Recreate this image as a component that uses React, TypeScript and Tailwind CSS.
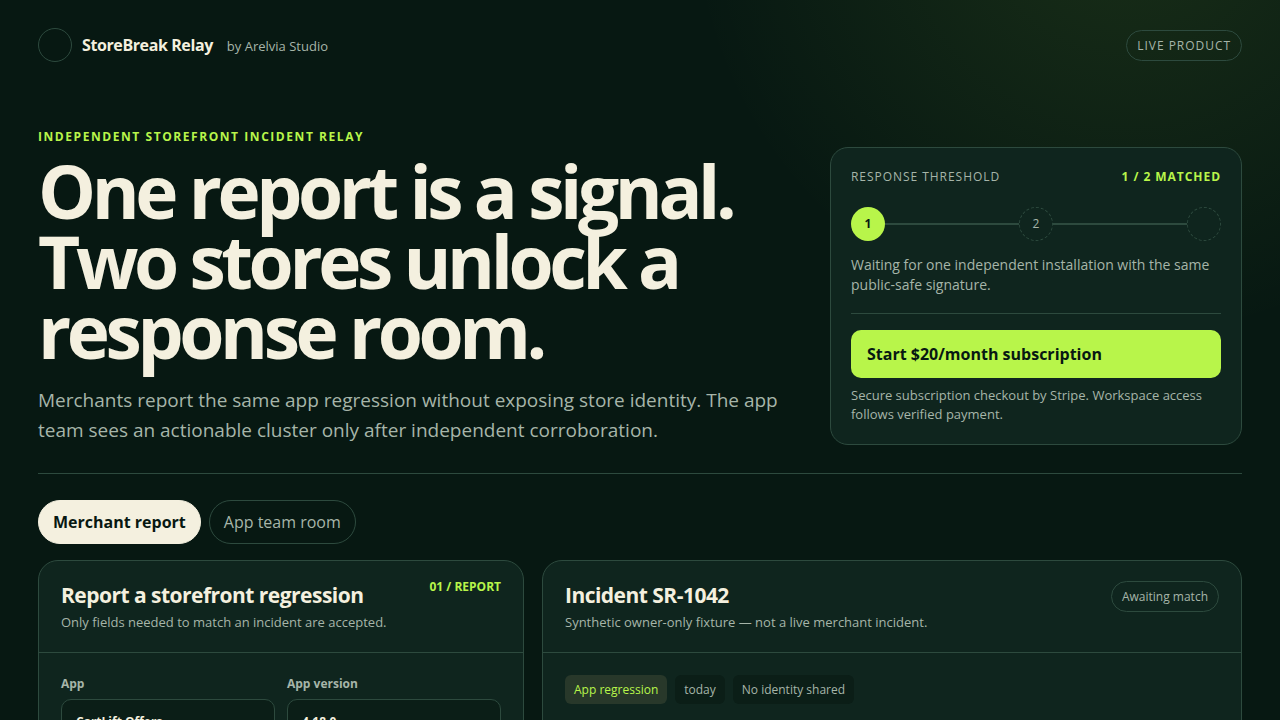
import { ReactNode, useState } from "react";

type View = "merchant" | "team";

const views: { id: View; label: string }[] = [
  { id: "merchant", label: "Merchant report" },
  { id: "team", label: "App team room" },
];

export default function App() {
  const [view, setView] = useState<View>("merchant");

  return (
    <div className="min-h-screen bg-[#071812] bg-[radial-gradient(circle_440px_at_88%_-98px,rgba(184,245,74,0.1),transparent)] bg-no-repeat px-[38px] pb-10 font-['Open_Sans',sans-serif] text-[#f4f0df]">
      <header className="flex items-center justify-between pt-7">
        <div className="flex items-center">
          <span className="size-[34px] rounded-full border border-[#2d4a3e]" />
          <div className="ml-[10px] flex items-baseline gap-[14px]">
            <strong className="text-base font-bold tracking-tight">
              StoreBreak Relay
            </strong>
            <span className="text-[13px] text-[#a6b5a9]">
              by Arelvia Studio
            </span>
          </div>
        </div>
        <span className="rounded-full border border-[#2d4a3e] px-[10px] py-[6px] text-xs leading-[17px] tracking-[0.08em] text-[#a6b5a9]">
          LIVE PRODUCT
        </span>
      </header>

      <main>
        <section className="mt-[65px] grid grid-cols-[1fr_412px] items-end gap-11 border-b border-[#2d4a3e] pb-7">
          <div>
            <p className="text-xs leading-5 font-bold tracking-[0.13em] text-[#b8f54a]">
              INDEPENDENT STOREFRONT INCIDENT RELAY
            </p>
            <h1 className="mt-[9px] text-[73px] leading-[70px] font-bold tracking-[-0.06em]">
              One report is a signal. Two stores unlock a response room.
            </h1>
            <p className="mt-[19px] text-[19px] leading-[30px] text-[#a6b5a9]">
              Merchants report the same app regression without exposing store
              identity. The app team sees an actionable cluster only after
              independent corroboration.
            </p>
          </div>
          <ThresholdCard />
        </section>

        <nav className="mt-[26px] flex gap-2">
          {views.map((item) => (
            <button
              key={item.id}
              onClick={() => setView(item.id)}
              className={
                view === item.id
                  ? "h-11 rounded-full border border-[#f4f0df] bg-[#f4f0df] px-[14px] font-bold text-[#071812]"
                  : "h-11 rounded-full border border-[#2d4a3e] px-[14px] text-[#a6b5a9]"
              }
            >
              {item.label}
            </button>
          ))}
        </nav>

        <div className="mt-4 grid grid-cols-[486fr_700fr] gap-[18px]">
          <Panel
            title="Report a storefront regression"
            subtitle="Only fields needed to match an incident are accepted."
            aside={
              <span className="text-xs leading-3 font-bold text-[#b8f54a]">
                01 / REPORT
              </span>
            }
          >
            <form className="grid grid-cols-2 gap-3">
              <Field id="app" label="App" value="CartLift Offers" />
              <Field id="version" label="App version" value="4.18.0" />
            </form>
          </Panel>

          <Panel
            title="Incident SR-1042"
            subtitle="Synthetic owner-only fixture — not a live merchant incident."
            aside={
              <span className="rounded-full border border-[#2d4a3e] px-[10px] py-[6px] text-xs leading-[17px] text-[#a6b5a9]">
                Awaiting match
              </span>
            }
          >
            <div className="flex gap-2 text-xs leading-[17px] text-[#a6b5a9]">
              <span className="rounded-md bg-[#28382a] px-[9px] py-[6px] text-[#b8f54a]">
                App regression
              </span>
              <span className="rounded-md bg-[#0b1e17] px-[9px] py-[6px]">
                today
              </span>
              <span className="rounded-md bg-[#0b1e17] px-[9px] py-[6px]">
                No identity shared
              </span>
            </div>
          </Panel>
        </div>
      </main>
    </div>
  );
}

function ThresholdCard() {
  return (
    <aside className="rounded-[18px] border border-[#2d4a3e] bg-[#0f251e] p-5">
      <div className="flex justify-between text-xs leading-[17px] tracking-[0.08em]">
        <span className="text-[#a6b5a9]">RESPONSE THRESHOLD</span>
        <strong className="font-bold text-[#b8f54a]">1 / 2 MATCHED</strong>
      </div>
      <div className="mt-[22px] flex items-center text-xs">
        <span className="flex size-[34px] items-center justify-center rounded-full bg-[#b8f54a] font-bold text-[#071812]">
          1
        </span>
        <span className="h-0.5 flex-1 bg-[#2d4a3e]" />
        <span className="flex size-[34px] items-center justify-center rounded-full border border-dashed border-[#2d4a3e] text-[#a6b5a9]">
          2
        </span>
        <span className="h-0.5 flex-1 bg-[#2d4a3e]" />
        <span className="size-[34px] rounded-full border border-dashed border-[#2d4a3e]" />
      </div>
      <p className="mt-[14px] text-sm leading-5 text-[#a6b5a9]">
        Waiting for one independent installation with the same public-safe
        signature.
      </p>
      <div className="mt-[18px] border-t border-[#2d4a3e] pt-4">
        <button className="h-12 w-full rounded-[10px] bg-[#b8f54a] px-4 text-left font-bold text-[#071812]">
          Start $20/month subscription
        </button>
        <p className="mt-2 text-[13px] leading-[19px] text-[#a6b5a9]">
          Secure subscription checkout by Stripe. Workspace access follows
          verified payment.
        </p>
      </div>
    </aside>
  );
}

interface PanelProps {
  title: string;
  subtitle: string;
  aside: ReactNode;
  children: ReactNode;
}

function Panel({ title, subtitle, aside, children }: PanelProps) {
  return (
    <section className="rounded-[20px] border border-[#2d4a3e] bg-[#0f251e]">
      <div className="flex items-start justify-between border-b border-[#2d4a3e] px-[22px] py-5">
        <div>
          <h2 className="text-[21px] leading-7 font-bold tracking-tight">
            {title}
          </h2>
          <p className="mt-1 text-[13px] leading-[19px] text-[#a6b5a9]">
            {subtitle}
          </p>
        </div>
        {aside}
      </div>
      <div className="p-[22px]">{children}</div>
    </section>
  );
}

interface FieldProps {
  id: string;
  label: string;
  value: string;
}

function Field({ id, label, value }: FieldProps) {
  return (
    <div className="flex min-w-0 flex-col gap-[6px]">
      <label
        htmlFor={id}
        className="text-xs leading-[18px] font-bold text-[#a6b5a9]"
      >
        {label}
      </label>
      <input
        id={id}
        type="text"
        defaultValue={value}
        className="h-11 w-full rounded-[10px] border border-[#2d4a3e] bg-[#0b1e17] px-[14px] text-xs font-bold text-[#f4f0df]"
      />
    </div>
  );
}
